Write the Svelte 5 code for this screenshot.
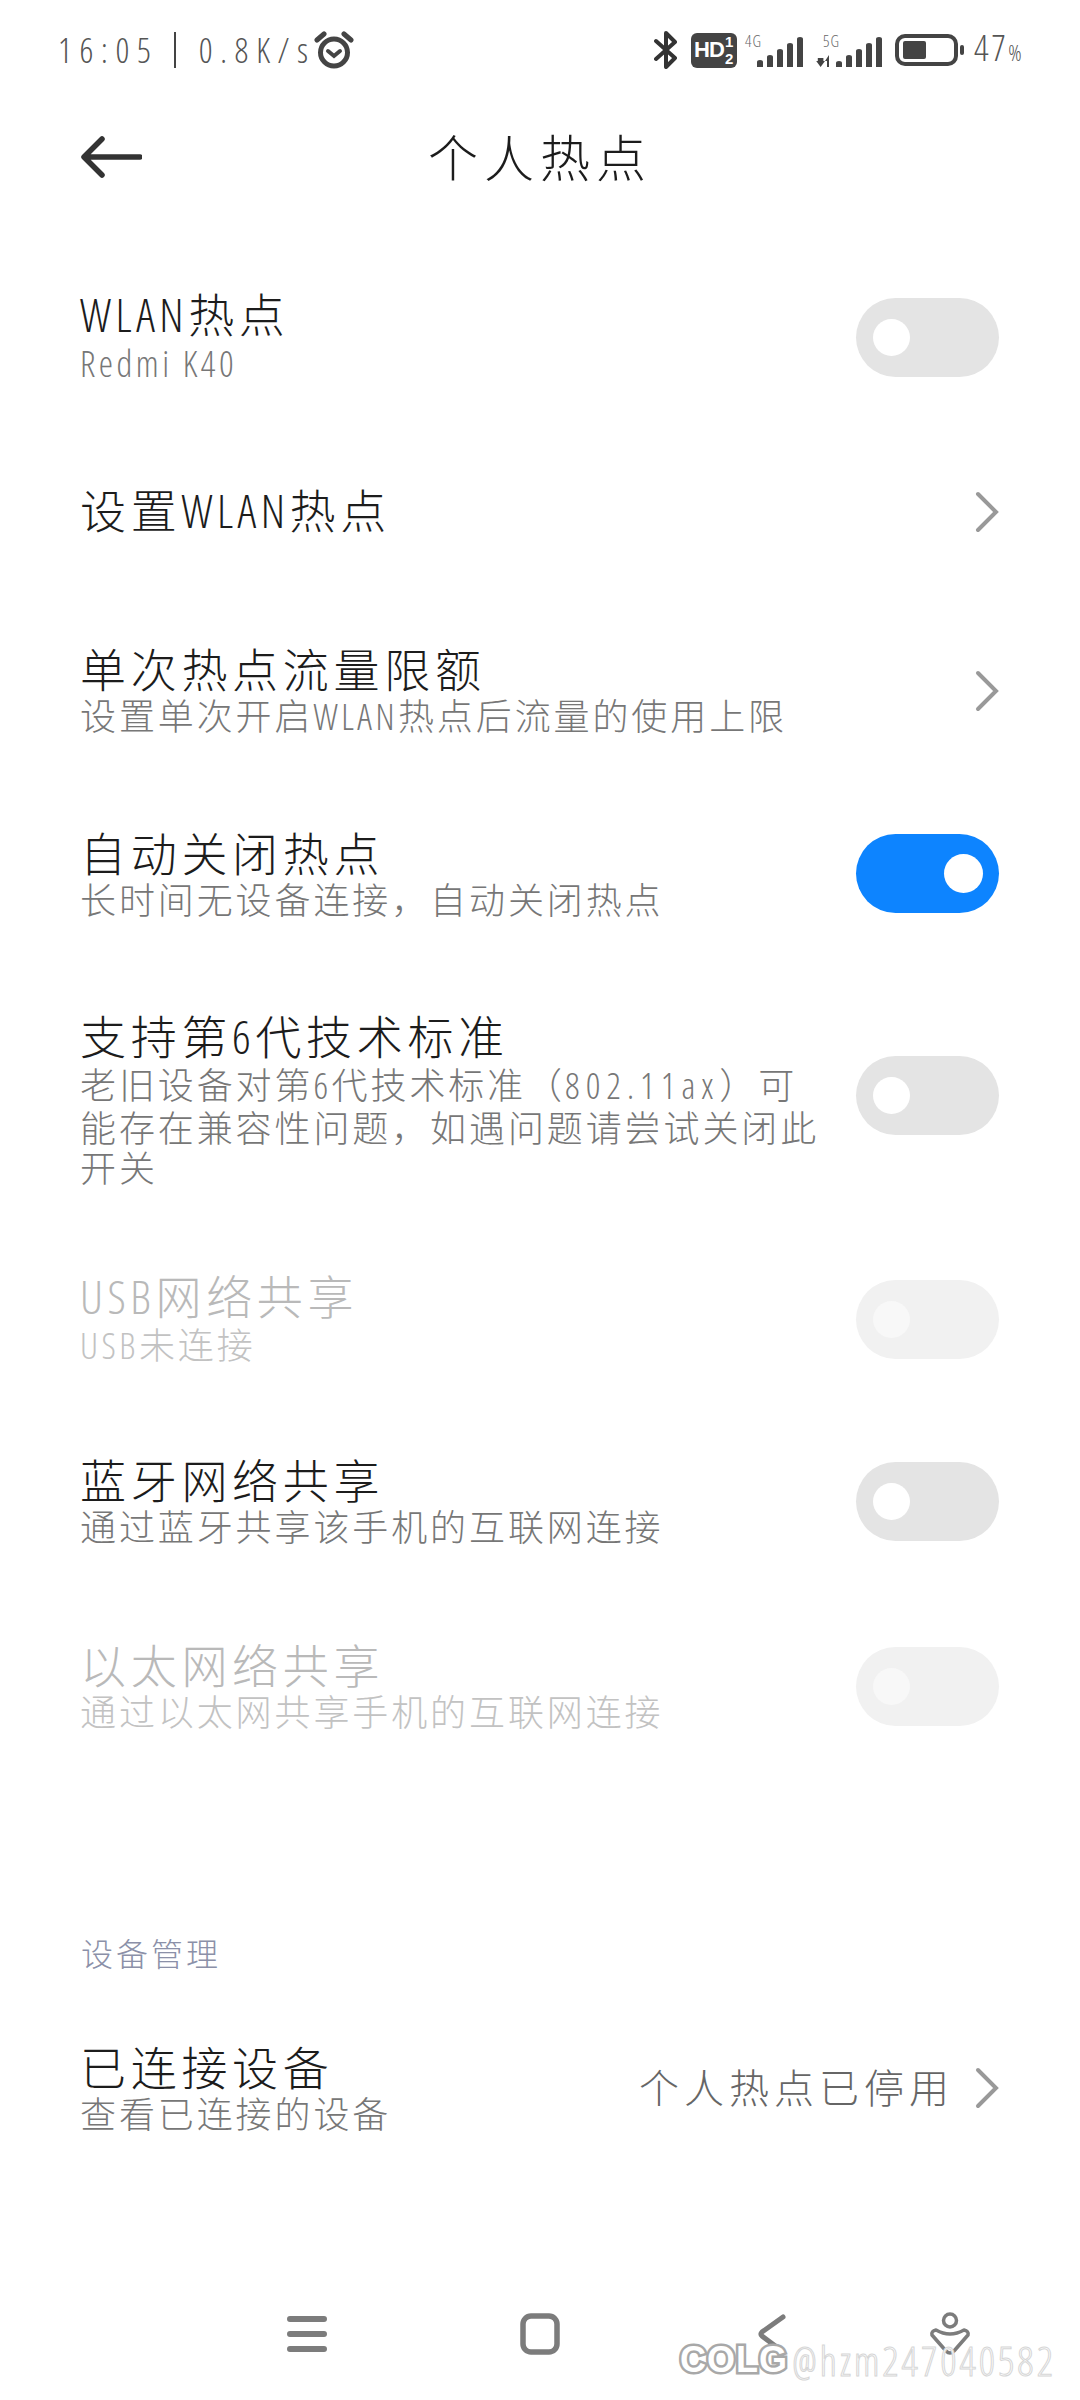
<script>
  const rows = [
    { h: 185, title: [['l', 'WLAN'], ['c', '热点']], sub: [['l', 'Redmi K40']], ctl: 'off' },
    { h: 164, title: [['c', '设置'], ['l', 'WLAN'], ['c', '热点']], ctl: 'chev' },
    { h: 194, title: [['c', '单次热点流量限额']], sub: [['c', '设置单次开启'], ['l', 'WLAN'], ['c', '热点后流量的使用上限']], ctl: 'chev' },
    { h: 171, title: [['c', '自动关闭热点']], sub: [['c', '长时间无设备连接，自动关闭热点']], ctl: 'on' },
    { h: 272, tall: true, title: [['c', '支持第'], ['l', '6'], ['c', '代技术标准']], sub: [['c', '老旧设备对第'], ['l', '6'], ['c', '代技术标准（'], ['w', '802.11ax'], ['c', '）可能存在兼容性问题，如遇问题请尝试关闭此开关']], ctl: 'off' },
    { h: 176, title: [['l', 'USB'], ['c', '网络共享']], sub: [['l', 'USB'], ['c', '未连接']], ctl: 'off', dis: true },
    { h: 188, title: [['c', '蓝牙网络共享']], sub: [['c', '通过蓝牙共享该手机的互联网连接']], ctl: 'off' },
    { h: 182, title: [['c', '以太网络共享']], sub: [['c', '通过以太网共享手机的互联网连接']], ctl: 'off', dis: true }
  ];
  const cls = { l: 'lat', w: 'lat wide', c: '' };
</script>

{#snippet chev()}
  <svg class="chev" width="24" height="42" viewBox="0 0 24 42"><path d="M3 3 L21 21 L3 39" /></svg>
{/snippet}

{#snippet runs(list)}
  {#each list as [kind, text]}<span class={cls[kind]}>{text}</span>{/each}
{/snippet}

<div class="page">
  <div class="status">
    <span class="clock">16:05</span>
    <span class="divider"></span>
    <span class="clock">0.8K/s</span>
    <svg class="alarm" width="42" height="38" viewBox="0 0 42 38">
      <circle cx="21" cy="21.5" r="13.5" fill="none" stroke="#444" stroke-width="5" />
      <path d="M4 9 L11 3 M38 9 L31 3" stroke="#444" stroke-width="5" stroke-linecap="round" fill="none" />
      <path d="M15 20 L21 25 L27 20" stroke="#444" stroke-width="4" stroke-linecap="round" fill="none" />
    </svg>
    <span class="spacer"></span>
    <svg class="bt" width="24" height="38" viewBox="0 0 24 38">
      <path d="M2 10 L21 27 L12 36 V2 L21 11 L2 28" fill="none" stroke="#333" stroke-width="4" stroke-linejoin="round" stroke-linecap="round" />
    </svg>
    <svg class="hd" width="46" height="35" viewBox="0 0 46 35">
      <rect width="46" height="35" rx="6" fill="#444" />
      <text x="3" y="24" class="hdt">HD</text>
      <text x="34" y="14" class="hdn">1</text>
      <text x="34" y="31" class="hdn">2</text>
    </svg>
    <svg class="sig" width="60" height="40" viewBox="0 -6 60 40">
      <text x="1" y="11" class="net">4G</text>
      <path d="M13 31 v-5 q0 -2 3 -2 q3 0 3 2 v5z M23 31 v-10 q0 -2 3 -2 q3 0 3 2 v10z M33 31 v-16 q0 -2 3 -2 q3 0 3 2 v16z M43 31 v-22 q0 -2 3 -2 q3 0 3 2 v22z M53 31 v-28 q0 -2 3 -2 q3 0 3 2 v28z" fill="#444" />
    </svg>
    <svg class="sig two" width="67" height="40" viewBox="0 -6 67 40">
      <text x="7" y="11" class="net">5G</text>
      <path d="M1 22 h7 v3 h2 l-5.500 6 l-5.500 -6 h2z" fill="#444" transform="translate(1 0) scale(0.8 1)" />
      <path d="M11 31 v-6 h-2 l4 -6 v12z" fill="#444" />
      <path d="M20 31 v-4 q0 -2 3 -2 q3 0 3 2 v4z M30 31 v-10 q0 -2 3 -2 q3 0 3 2 v10z M40 31 v-16 q0 -2 3 -2 q3 0 3 2 v16z M50 31 v-22 q0 -2 3 -2 q3 0 3 2 v22z M60 31 v-28 q0 -2 3 -2 q3 0 3 2 v28z" fill="#444" />
    </svg>
    <svg class="bat" width="70" height="32" viewBox="0 0 70 32">
      <rect x="2" y="2" width="59" height="28" rx="8" fill="none" stroke="#444" stroke-width="4" />
      <rect x="8" y="7" width="23" height="18" rx="2" fill="#444" />
      <rect x="65" y="11" width="4" height="10" rx="2" fill="#444" />
    </svg>
    <span class="pct">47<span class="pc">%</span></span>
  </div>

  <div class="header">
    <svg class="back" width="62" height="44" viewBox="0 0 62 44">
      <path d="M60 22 H5 M22 4 L4 22 L22 40" fill="none" stroke="#333" stroke-width="5.500" stroke-linecap="round" stroke-linejoin="round" />
    </svg>
    <h1>个人热点</h1>
  </div>

  <div class="list">
    {#each rows as r}
      <div class="row" class:dis={r.dis} class:tall={r.tall} style="height:{r.h}px">
        <div class="text">
          <div class="title">{@render runs(r.title)}</div>
          {#if r.sub}<div class="sub">{@render runs(r.sub)}</div>{/if}
        </div>
        {#if r.ctl === 'chev'}
          {@render chev()}
        {:else}
          <div class="toggle" class:on={r.ctl === 'on'}><span class="knob"></span></div>
        {/if}
      </div>
    {/each}
  </div>

  <div class="section">设备管理</div>

  <div class="row last">
    <div class="text">
      <div class="title">已连接设备</div>
      <div class="sub">查看已连接的设备</div>
    </div>
    <span class="value">个人热点已停用</span>
    {@render chev()}
  </div>

  <div class="nav">
    <svg class="n1" width="40" height="38" viewBox="0 0 40 38"><path d="M3 4 H37 M3 19 H37 M3 34 H37" stroke="#7c7c7c" stroke-width="6" stroke-linecap="round" /></svg>
    <svg class="n2" width="40" height="42" viewBox="0 0 40 42"><rect x="3" y="3" width="34" height="36" rx="8" fill="none" stroke="#7c7c7c" stroke-width="5.500" /></svg>
    <svg class="n3" width="28" height="40" viewBox="0 0 28 40"><path d="M25 3 L4 18 Q2 20 4 22 L24 37" fill="none" stroke="#7c7c7c" stroke-width="5" stroke-linecap="round" /></svg>
    <svg class="n4" width="44" height="46" viewBox="0 0 44 46">
      <circle cx="22" cy="9.500" r="6.500" fill="none" stroke="#7c7c7c" stroke-width="3.500" />
      <path d="M4 24 Q3 20 8 19 Q22 27 36 19 Q41 20 40 24 L26 40 Q22 44 18 40 Z" fill="none" stroke="#7c7c7c" stroke-width="3.500" stroke-linejoin="round" />
    </svg>
  </div>

  <div class="mark"><span class="colg">COLG</span><span class="user">@hzm247040582</span></div>
</div>

<style>
  :global(body) { margin: 0; background: #fff; }
  .page {
    position: relative;
    width: 1080px;
    height: 2400px;
    overflow: hidden;
    background: #fff;
    font-family: "Noto Sans CJK SC", "Noto Sans", sans-serif;
    font-weight: 300;
  }
  .status {
    display: flex;
    align-items: center;
    height: 100px;
    padding: 0 54px 0 58px;
    box-sizing: border-box;
    color: #555;
  }
  .clock {
    font-family: "Open Sans", "Liberation Sans", sans-serif;
    font-stretch: 75%;
    font-weight: 300;
    font-size: 34px;
    letter-spacing: 7.700px;
    line-height: 36px;
    white-space: nowrap;
  }
  .divider { width: 2px; height: 36px; background: #444; margin: 0 23px 0 15px; }
  .alarm { margin-left: -3px; }
  .spacer { flex: 1; }
  .bt { margin-right: 13px; }
  .hd { margin-right: 7px; }
  .hdt { font: 700 22px "Liberation Sans", sans-serif; fill: #fff; letter-spacing: -1px; }
  .hdn { font: 700 15px "Liberation Sans", sans-serif; fill: #fff; }
  .net { font: 300 16px "Open Sans", "Liberation Sans", sans-serif; font-stretch: 75%; fill: #666; letter-spacing: 1px; }
  .sig.two { margin-left: 12px; margin-right: 12px; }
  .bat { margin-right: 9px; }
  .pct {
    flex: none;
    width: 52px;
    white-space: nowrap;
    font-family: "Open Sans", "Liberation Sans", sans-serif;
    font-stretch: 75%;
    font-weight: 300;
    font-size: 36px;
    letter-spacing: 2.500px;
    color: #555;
    line-height: 36px;
  }
  .pc { font-size: 22px; letter-spacing: 0; }

  .header {
    position: relative;
    height: 112px;
    display: flex;
    align-items: center;
    justify-content: center;
  }
  .back { position: absolute; left: 80px; top: 35px; }
  h1 {
    margin: -3px 0 0;
    font-size: 50px;
    font-weight: 300;
    letter-spacing: 6px;
    color: #1c1c1c;
    line-height: 60px;
  }
  .list { padding-top: 33px; }
  .row {
    display: flex;
    align-items: center;
    padding: 0 81px 0 80px;
    box-sizing: border-box;
  }
  .text { flex: 1; min-width: 0; margin-top: -6px; }
  .tall .text { margin-top: 2px; }
  .title {
    font-size: 46px;
    letter-spacing: 4.700px;
    line-height: 54px;
    color: #1c1c1c;
  }
  .sub {
    font-size: 36px;
    letter-spacing: 2.900px;
    line-height: 40px;
    color: #777;
    margin-right: 26px;
  }
  .lat {
    font-family: "Open Sans", "Liberation Sans", sans-serif;
    font-stretch: 75%;
    font-weight: 300;
    letter-spacing: 4.500px;
  }
  .sub .lat { letter-spacing: 3.500px; }
  .sub .lat.wide { letter-spacing: 6px; }
  .dis .title { color: #b9b9b9; }
  .dis .sub { color: #c2c2c2; }
  .toggle {
    flex: none;
    position: relative;
    width: 143px;
    height: 79px;
    border-radius: 40px;
    background: #e4e4e4;
  }
  .knob {
    position: absolute;
    left: 17px;
    top: 21px;
    width: 37px;
    height: 37px;
    border-radius: 50%;
    background: #fff;
  }
  .toggle.on { background: #0d84ff; }
  .toggle.on .knob { left: 88px; top: 20px; width: 39px; height: 39px; }
  .dis .toggle { background: #f1f1f1; }
  .dis .knob { background: #f8f8f8; }
  .chev { flex: none; }
  .chev path { fill: none; stroke: #999; stroke-width: 4px; stroke-linecap: round; }
  .section {
    margin-top: 150px;
    padding-left: 81px;
    font-size: 32px;
    letter-spacing: 3px;
    line-height: 50px;
    color: #8b90a8;
  }
  .last { height: 185px; margin-top: 18px; }
  .value {
    font-size: 40px;
    letter-spacing: 5px;
    color: #666;
    margin-right: 21px;
    margin-top: -3px;
  }
  .nav {
    display: flex;
    align-items: center;
    height: 60px;
    margin-top: 124px;
    padding-left: 287px;
  }
  .n2 { margin-left: 193px; }
  .n3 { margin-left: 198px; }
  .n4 { margin-left: 142px; }
  .mark {
    position: absolute;
    left: 680px;
    top: 2336px;
    display: flex;
    align-items: center;
    gap: 4px;
    white-space: nowrap;
    height: 48px;
  }
  .colg {
    font: 700 36px "Liberation Sans", sans-serif;
    color: #fff;
    -webkit-text-stroke: 5px #a8a8a8;
    paint-order: stroke fill;
    letter-spacing: 1px;
  }
  .user {
    font: 300 40px "Open Sans", "Liberation Sans", sans-serif;
    font-stretch: 75%;
    color: #fff;
    -webkit-text-stroke: 1px #d6d6d6;
    letter-spacing: 3px;
  }
</style>
